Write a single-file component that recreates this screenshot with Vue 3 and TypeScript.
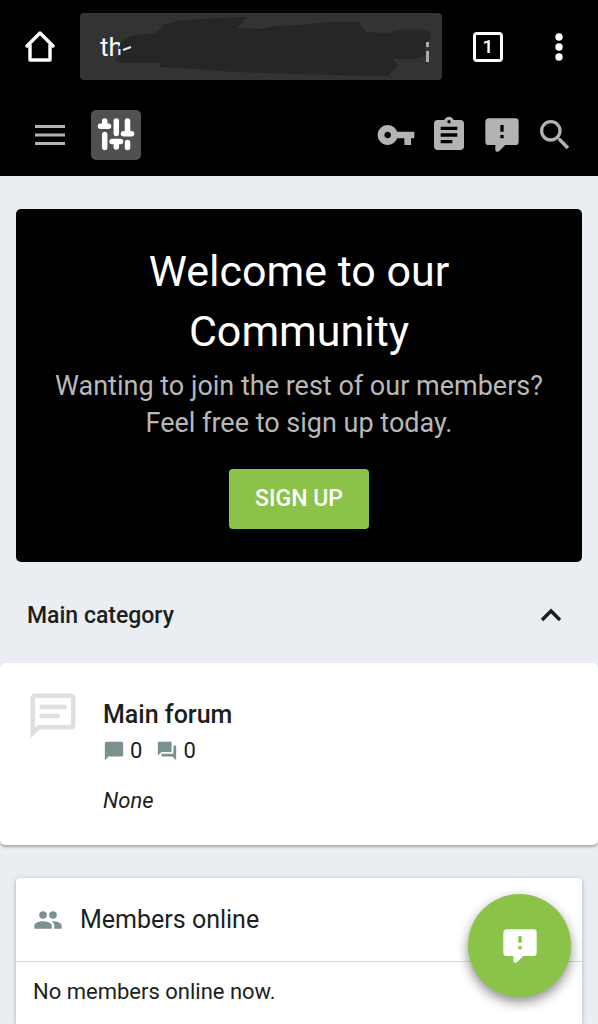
<script setup lang="ts">
import { ref } from 'vue'

interface Action {
  label: string
  path: string
}

const alertPath =
  'M9,22A1,1 0 0,1 8,21V18H4A2,2 0 0,1 2,16V4C2,2.89 2.9,2 4,2H20A2,2 0 0,1 22,4V16A2,2 0 0,1 20,18H13.9L10.2,21.71C10,21.9 9.75,22 9.5,22V22H9M13,10V6H11V10H13M13,14V12H11V14H13Z'

const actions: Action[] = [
  {
    label: 'Log in',
    path: 'M12.65 10C11.83 7.67 9.61 6 7 6c-3.31 0-6 2.69-6 6s2.69 6 6 6c2.61 0 4.83-1.67 5.65-4H17v4h4v-4h2v-4H12.65zM7 14c-1.1 0-2-.9-2-2s.9-2 2-2 2 .9 2 2-.9 2-2 2z',
  },
  {
    label: 'Register',
    path: 'M19 3h-4.18C14.4 1.84 13.3 1 12 1c-1.3 0-2.4.84-2.82 2H5c-1.1 0-2 .9-2 2v14c0 1.1.9 2 2 2h14c1.1 0 2-.9 2-2V5c0-1.1-.9-2-2-2zm-7 0c.55 0 1 .45 1 1s-.45 1-1 1-1-.45-1-1 .45-1 1-1zm2 14H7v-2h7v2zm3-4H7v-2h10v2zm0-4H7V7h10v2z',
  },
  { label: "What's new", path: alertPath },
  {
    label: 'Search',
    path: 'M9.5,3A6.5,6.5 0 0,1 16,9.5C16,11.11 15.41,12.59 14.44,13.73L14.71,14H15.5L20.5,19L19,20.5L14,15.5V14.71L13.73,14.44C12.59,15.41 11.11,16 9.5,16A6.5,6.5 0 0,1 3,9.5A6.5,6.5 0 0,1 9.5,3M9.5,5C7,5 5,7 5,9.5C5,12 7,14 9.5,14C12,14 14,12 14,9.5C14,7 12,5 9.5,5Z',
  },
]

const address = ref('th')
const expanded = ref(true)
</script>

<template>
  <div class="page">
    <header class="top">
      <div class="browser">
        <button class="plain" type="button" aria-label="Home">
          <svg width="30" height="32" viewBox="0 0 30 32" fill="none" stroke="#fff" stroke-width="3.400" stroke-linejoin="round" stroke-linecap="round">
            <path d="M2 15L15 2L28 15M5 14V29H25V14" />
          </svg>
        </button>
        <div class="address">
          <input v-model="address" type="text" aria-label="Address" />
          <svg class="scribble" viewBox="0 0 362 67" aria-hidden="true">
            <path
              fill="#262626"
              d="M34 47L39 42V34L41 29Q46 24 54 22L73 21Q79 18 83 12Q88 10 98 8Q125 5 167 4L157 15L183 16Q190 13 197 13L218 12L248 9L281 9L280 12L286 19L308 20L315 18Q330 15 344 17L351 20L350 26L345 35L346 42Q341 46 331 46H313L318 52L308 63L251 62L220 61L153 59L117 56L80 54L81 50H42Z"
            />
            <path d="M39.500 36V42M43 37L51 34" stroke="#eee" stroke-width="2" fill="none" />
            <path d="M347.500 29V34M347.500 38V49" stroke="#aaa" stroke-width="3" fill="none" />
          </svg>
        </div>
        <button class="tabs" type="button" aria-label="Open tabs">1</button>
        <button class="plain" type="button" aria-label="Browser menu">
          <svg width="8" height="28" viewBox="0 0 8 28" fill="#fff">
            <circle cx="4" cy="4" r="3.700" /><circle cx="4" cy="14" r="3.700" /><circle cx="4" cy="24" r="3.700" />
          </svg>
        </button>
      </div>

      <nav class="appbar">
        <button class="plain" type="button" aria-label="Menu">
          <svg width="30" height="20" viewBox="0 0 30 20" fill="#b3b3b3">
            <path d="M0 0h30v3H0zM0 8.500h30v3H0zM0 17h30v3H0z" />
          </svg>
        </button>
        <a class="logo" href="#" aria-label="Forum home">
          <svg width="50" height="50" viewBox="0 0 50 50" fill="none" stroke="#fff" stroke-width="5.500" stroke-linecap="round">
            <path d="M13.700 11V16M9.500 16.300H17.500M13.700 24.500V37.500M25.300 11V23.500M36.500 11V23M32.500 23.700H40.500M21 31.500H29.500M25.300 32V37M36.500 32.500V37.500" />
          </svg>
        </a>
        <div class="actions">
          <button v-for="a in actions" :key="a.label" class="plain" type="button" :aria-label="a.label">
            <svg width="40" height="40" viewBox="0 0 24 24" fill="#b3b3b3"><path :d="a.path" /></svg>
          </button>
        </div>
      </nav>
    </header>

    <main>
      <section class="hero">
        <h1>Welcome to our Community</h1>
        <p>Wanting to join the rest of our members? Feel free to sign up today.</p>
        <a class="signup" href="#">SIGN UP</a>
      </section>

      <section class="category">
        <div class="category-head">
          <h2>Main category</h2>
          <button class="plain" type="button" aria-label="Toggle category" :aria-expanded="expanded" @click="expanded = !expanded">
            <svg width="22" height="16" viewBox="0 0 22 16" fill="none" stroke="#1c1f20" stroke-width="3.400"><path d="M2 12L11 3L20 12" /></svg>
          </button>
        </div>
        <div v-if="expanded" class="forum">
          <svg class="forum-icon" width="54" height="54" viewBox="0 0 24 24" fill="#dfdfdf">
            <path d="M20,2A2,2 0 0,1 22,4V16A2,2 0 0,1 20,18H6L2,22V4C2,2.89 2.9,2 4,2H20M4,4V17.17L5.17,16H20V4H4M6,7H18V9H6V7M6,11H15V13H6V11Z" />
          </svg>
          <div>
            <h3><a href="#">Main forum</a></h3>
            <div class="stats">
              <svg width="22" height="22" viewBox="0 0 24 24" fill="#7b9190"><path d="M20 2H4c-1.100 0-2 .9-2 2v18l4-4h14c1.100 0 2-.9 2-2V4c0-1.100-.9-2-2-2z" /></svg>
              <span>0</span>
              <svg class="second" width="22" height="22" viewBox="0 0 24 24" fill="#7b9190">
                <path d="M21 6h-2v9H6v2c0 .55.45 1 1 1h11l4 4V7c0-.55-.45-1-1-1zm-4 6V3c0-.55-.45-1-1-1H3c-.55 0-1 .45-1 1v14l4-4h10c.55 0 1-.45 1-1z" />
              </svg>
              <span>0</span>
            </div>
            <p class="none">None</p>
          </div>
        </div>
      </section>

      <section class="members">
        <h3>
          <svg width="30" height="30" viewBox="0 0 24 24" fill="#7b9190">
            <path d="M16,13C15.71,13 15.38,13 15.03,13.05C16.19,13.89 17,15 17,16.5V19H23V16.5C23,14.17 18.33,13 16,13M8,13C5.67,13 1,14.17 1,16.5V19H15V16.5C15,14.17 10.33,13 8,13M8,11A3,3 0 0,0 11,8A3,3 0 0,0 8,5A3,3 0 0,0 5,8A3,3 0 0,0 8,11M16,11A3,3 0 0,0 19,8A3,3 0 0,0 16,5A3,3 0 0,0 13,8A3,3 0 0,0 16,11Z" />
          </svg>
          <a href="#">Members online</a>
        </h3>
        <p>No members online now.</p>
      </section>
    </main>

    <button class="fab" type="button" aria-label="New posts">
      <svg width="40" height="40" viewBox="0 0 24 24" fill="#fff"><path :d="alertPath" /></svg>
    </button>
  </div>
</template>

<style>
body {
  margin: 0;
  background: #eaedf2;
}
</style>

<style scoped>
* {
  box-sizing: border-box;
}
.page {
  min-height: 100vh;
  display: flex;
  flex-direction: column;
  background: #eaedf2;
  color: #1c1f20;
  font-family: Roboto, "Liberation Sans", sans-serif;
  font-size: 22px;
  line-height: 32px;
}
h1, h2, h3, p {
  margin: 0;
}
a {
  color: inherit;
  text-decoration: none;
}
svg {
  display: block;
  flex: none;
}
button {
  font-family: inherit;
  cursor: pointer;
}
.plain {
  border: 0;
  padding: 0;
  background: none;
}
.top {
  background: #000;
}
.browser {
  display: flex;
  align-items: center;
  padding: 13px 35px 12px 25px;
}
.address {
  position: relative;
  flex: 1;
  height: 67px;
  margin: 0 31px 0 25px;
}
.address input {
  width: 100%;
  height: 100%;
  border: 0;
  border-radius: 4px;
  padding: 0 20px;
  background: #333;
  color: #fff;
  font: 26px Roboto, "Liberation Sans", sans-serif;
}
.scribble {
  position: absolute;
  inset: 0;
  width: 100%;
  height: 100%;
  pointer-events: none;
}
.tabs {
  width: 30px;
  height: 30px;
  margin-right: 52px;
  padding: 0;
  border: 3px solid #fff;
  border-radius: 4px;
  background: none;
  color: #fff;
  font-size: 19px;
  font-weight: 500;
  line-height: 24px;
}
.appbar {
  display: flex;
  align-items: center;
  height: 84px;
  padding: 2px 23px 0 35px;
}
.logo {
  margin-left: 26px;
  border-radius: 5px;
  background: #505050;
}
.actions {
  display: flex;
  gap: 13px;
  margin-left: auto;
}
main {
  flex: 1;
  display: flex;
  flex-direction: column;
  padding-top: 33px;
}
.hero {
  margin: 0 16px;
  padding: 32px 32px 33px;
  border-radius: 5px;
  background: #000;
  text-align: center;
}
h1 {
  max-width: 400px;
  margin: 0 auto;
  color: #fff;
  font-size: 43px;
  font-weight: 400;
  line-height: 60px;
}
.hero p {
  margin: 7px 0 27px;
  color: #b8b8b8;
  font-size: 27px;
  line-height: 37px;
}
.signup {
  display: inline-block;
  padding: 0 26px;
  border-radius: 4px;
  background: #8bc34a;
  color: #fff;
  font-size: 23px;
  font-weight: 500;
  line-height: 60px;
  vertical-align: top;
}
.category-head {
  display: flex;
  align-items: center;
  justify-content: space-between;
  height: 101px;
  padding: 6px 36px 0 27px;
}
h2 {
  font-size: 23px;
  font-weight: 500;
}
.forum {
  display: flex;
  gap: 23px;
  padding: 26px;
  min-height: 182px;
  border-radius: 5px;
  background: #fff;
  box-shadow: 0 2px 3px rgba(0, 0, 0, 0.3);
}
.forum h3 {
  margin-top: 10px;
  font-size: 25px;
  font-weight: 500;
}
.stats {
  display: flex;
  align-items: center;
  gap: 5px;
  margin-top: 4px;
}
.second {
  margin-left: 9px;
}
.none {
  margin-top: 18px;
  font-style: italic;
}
.members {
  flex: 1;
  margin: 33px 16px 0;
  border-radius: 4px 4px 0 0;
  background: #fff;
  box-shadow: 0 1px 4px rgba(0, 0, 0, 0.3);
}
.members h3 {
  display: flex;
  align-items: center;
  gap: 17px;
  height: 84px;
  padding: 0 17px;
  border-bottom: 1px solid #d8d8d8;
  font-size: 25px;
  font-weight: 400;
}
.members p {
  padding: 14px 17px 0;
}
.fab {
  position: fixed;
  right: 27px;
  bottom: 27px;
  display: flex;
  align-items: center;
  justify-content: center;
  width: 103px;
  height: 103px;
  padding: 0;
  border: 0;
  border-radius: 50%;
  background: #8bc34a;
  box-shadow: 0 5px 12px rgba(0, 0, 0, 0.45);
}
</style>
